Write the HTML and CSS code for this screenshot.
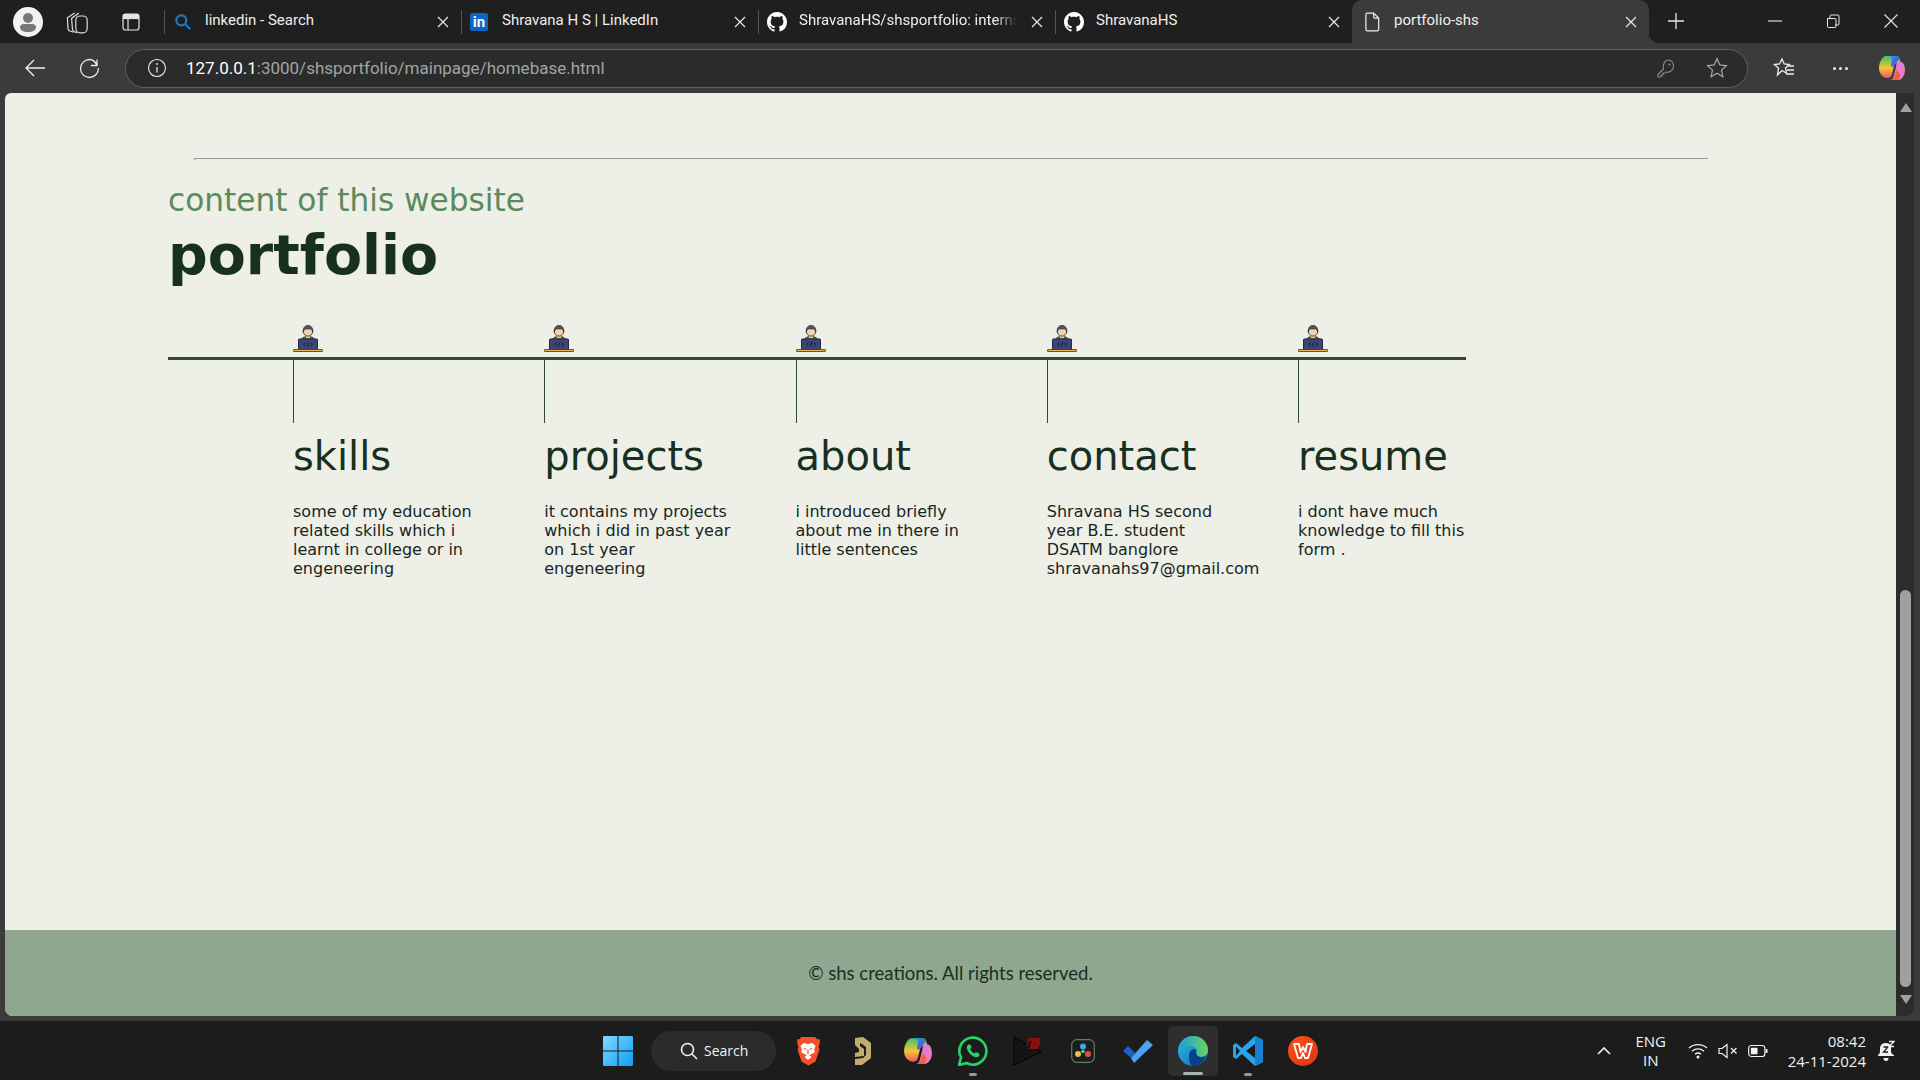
FILE: index.html
```html
<!DOCTYPE html>
<html lang="en">
<head>
    <meta charset="UTF-8">
    <title>portfolio-shs</title>
    <link rel="stylesheet" href="styles.css">
</head>
<body>

    <svg class="defs" width="0" height="0">
        <symbol id="github" viewBox="0 0 16 16">
            <path fill="#fff" d="M8 0C3.58 0 0 3.58 0 8c0 3.54 2.29 6.53 5.47 7.59.4.07.55-.17.55-.38 0-.19-.01-.82-.01-1.49-2.01.37-2.53-.49-2.69-.94-.09-.23-.48-.94-.82-1.13-.28-.15-.68-.52-.01-.53.63-.01 1.08.58 1.23.82.72 1.21 1.87.87 2.33.66.07-.52.28-.87.51-1.07-1.78-.2-3.64-.89-3.64-3.95 0-.87.31-1.59.82-2.15-.08-.2-.36-1.02.08-2.12 0 0 .67-.21 2.2.82.64-.18 1.32-.27 2-.27.68 0 1.36.09 2 .27 1.53-1.04 2.2-.82 2.2-.82.44 1.1.16 1.92.08 2.12.51.56.82 1.27.82 2.15 0 3.07-1.87 3.75-3.65 3.95.29.25.54.73.54 1.48 0 1.07-.01 1.93-.01 2.2 0 .21.15.46.55.38A8.013 8.013 0 0016 8c0-4.42-3.58-8-8-8z"/>
        </symbol>
        <symbol id="closex" viewBox="0 0 16 16">
            <path d="M3 3l10 10M13 3L3 13" stroke="#e8e8e8" stroke-width="1.2" fill="none"/>
        </symbol>
        <symbol id="coder" viewBox="0 0 30 27">
            <path d="M8 16c0-3 3-4.500 7-4.500s7 1.500 7 4.500z" fill="#6d6320" stroke="#2b2b1e" stroke-width=".8"/>
            <rect x="13" y="9" width="4" height="4" fill="#eec9a2"/>
            <circle cx="15" cy="6.500" r="4.600" fill="#f2d2ad" stroke="#2b2b2b" stroke-width=".8"/>
            <path d="M10.200 7.500C9.500 2.500 12.500.3 15 .3s5.500 2.200 4.800 7.200c-.5-2-1-3.500-2-3.500h-5.600c-1 0-1.500 1.500-2 3.500z" fill="#55565a" stroke="#2b2b2b" stroke-width=".6"/>
            <rect x="5.500" y="14" width="19" height="10.500" rx=".6" fill="#3b4676" stroke="#23284a" stroke-width="1"/>
            <path d="M12.500 17.500l-2 1.800 2 1.800M17.500 17.500l2 1.800-2 1.800M15.800 17l-1.600 4.600" fill="none" stroke="#171b36" stroke-width="1"/>
            <rect x=".5" y="24.500" width="29" height="2" rx=".5" fill="#f1b451" stroke="#3a3226" stroke-width=".8"/>
        </symbol>
    </svg>

    <div class="tabstrip">
        <div class="strip-left">
            <svg class="profile" viewBox="0 0 30 30"><circle cx="15" cy="15" r="15" fill="#f2f2f2"/><circle cx="15" cy="11" r="5" fill="#777"/><path d="M7 20c0-2 2-3 4-3h8c2 0 4 1 4 3 0 3-3 5-8 5s-8-2-8-5z" fill="#777"/></svg>
            <svg class="strip-icon strip-stack" viewBox="0 0 20 20"><g fill="none" stroke="#ddd" stroke-width="1"><path d="M7 18.500l-3-1C3 17 2.500 16.500 2.500 15.500L2 6.500 8 2.500"/><path d="M10 19l-2.500-1c-.8-.4-1.200-1-1.300-2L5.500 7l6-4.500"/><rect x="9" y="5" width="9.500" height="14" rx="3.500"/></g></svg>
            <svg class="strip-icon" viewBox="0 0 20 20"><g fill="none" stroke="#e4e4e4" stroke-width="1.200"><rect x="2" y="2" width="16" height="16" rx="2.500"/><path d="M2 6.500h16"/><path d="M7 6.500V18"/></g><rect x="2" y="2" width="16" height="4.500" fill="#e4e4e4"/></svg>
        </div>
        <div class="tab">
            <svg class="tab-icon" viewBox="0 0 18 18"><circle cx="7.500" cy="7.500" r="4.500" fill="none" stroke="#1a78c2" stroke-width="2"/><path d="M11 11l4.500 4.500" stroke="#1a78c2" stroke-width="2"/></svg>
            <span class="tab-title">linkedin - Search</span>
            <svg class="tab-close"><use href="#closex"/></svg>
        </div>
        <div class="tab">
            <span class="tab-icon li-badge">in</span>
            <span class="tab-title">Shravana H S | LinkedIn</span>
            <svg class="tab-close"><use href="#closex"/></svg>
        </div>
        <div class="tab">
            <svg class="tab-icon"><use href="#github"/></svg>
            <span class="tab-title tab-fade">ShravanaHS/shsportfolio: internship</span>
            <svg class="tab-close"><use href="#closex"/></svg>
        </div>
        <div class="tab">
            <svg class="tab-icon"><use href="#github"/></svg>
            <span class="tab-title">ShravanaHS</span>
            <svg class="tab-close"><use href="#closex"/></svg>
        </div>
        <div class="tab tab-active">
            <svg class="tab-icon" viewBox="0 0 18 18"><path d="M3.500 2.500C3.500 1.500 4 1 5 1h5.500l4.500 4.500V15.500c0 1-.5 1.500-1.500 1.500H5c-1 0-1.500-.5-1.500-1.500zM10.500 1v3.500c0 .7.400 1 1 1H15" fill="none" stroke="#eee" stroke-width="1.100"/></svg>
            <span class="tab-title">portfolio-shs</span>
            <svg class="tab-close"><use href="#closex"/></svg>
        </div>
        <svg class="new-tab" viewBox="0 0 18 18"><path d="M9 1v16M1 9h16" stroke="#e8e8e8" stroke-width="1.300"/></svg>
        <div class="win-controls">
            <svg viewBox="0 0 14 14"><path d="M0 7h14" stroke="#e8e8e8" stroke-width="1.100"/></svg>
            <svg viewBox="0 0 14 14"><path d="M1.500 4.500h7.500c.6 0 1 .4 1 1v7c0 .6-.4 1-1 1H2.500c-.6 0-1-.4-1-1z M4 4.500V2c0-.6.400-1 1-1h7c.6 0 1 .4 1 1v8c0 .6-.4 1-1 1h-3" fill="none" stroke="#e8e8e8" stroke-width="1"/></svg>
            <svg viewBox="0 0 14 14"><path d="M.5.5l13 13M13.500.5l-13 13" stroke="#e8e8e8" stroke-width="1.100"/></svg>
        </div>
    </div>

    <div class="toolbar">
        <svg class="tool tool-back" viewBox="0 0 22 22"><path d="M21 11H2M10 3l-8 8 8 8" fill="none" stroke="#eee" stroke-width="1.400"/></svg>
        <svg class="tool tool-reload" viewBox="0 0 22 22"><path d="M18 2.500v6h-6M18 8.500C16.500 5 14 2.500 10.500 2.500 6 2.500 1.500 6.500 1.500 11.500s4 9 9 9 9-4 9-9.500" fill="none" stroke="#eee" stroke-width="1.300"/></svg>
        <div class="addressbar">
            <svg class="addr-info" viewBox="0 0 20 20"><circle cx="10" cy="10" r="8.500" fill="none" stroke="#eee" stroke-width="1.100"/><path d="M10 9v5.500" stroke="#eee" stroke-width="1.200"/><circle cx="10" cy="6" r=".9" fill="#eee"/></svg>
            <div class="addr-url"><span class="addr-host">127.0.0.1</span>:3000/shsportfolio/mainpage/homebase.html</div>
            <svg class="addr-icon addr-key" viewBox="0 0 20 20"><path d="M7.500 11L2 16.500V19h3v-2h2v-2h2l1-1c3.500 1 7.500-1.500 7.500-6C17.500 4.500 15 2 12.500 2 9 2 6.500 6 7.500 11z" fill="none" stroke="#8c8c8c" stroke-width="1.100"/><circle cx="13.500" cy="6.500" r="1" fill="#8c8c8c"/></svg>
            <svg class="addr-icon addr-star" viewBox="0 0 22 22"><path d="M11 1.800l2.800 6.100 6.600.7-4.900 4.500 1.400 6.600-5.900-3.400-5.900 3.400 1.400-6.600L1.600 8.600l6.600-.7z" fill="none" stroke="#aaa" stroke-width="1.200"/></svg>
        </div>
        <svg class="tool tool-fav" viewBox="0 0 22 22"><path d="M9 2l2.200 5 5 .5-3.700 3.500 1 5.200L9 13.500 4.500 18l1-6.800L1.500 7.500l5-.5zM14 9h7M14 13h7M13 17h8" fill="none" stroke="#eee" stroke-width="1.300"/></svg>
        <div class="tool-dots"><span></span><span></span><span></span></div>
        <svg class="tool tool-copilot" viewBox="0 0 28 28"><defs><linearGradient id="cpa" x1="0" y1="0" x2="1" y2="1"><stop offset="0" stop-color="#1fb6ee"/><stop offset=".5" stop-color="#3a6fe0"/><stop offset="1" stop-color="#7b4fe0"/></linearGradient><linearGradient id="cpb" x1="0" y1="0" x2="0" y2="1"><stop offset="0" stop-color="#3cc06c"/><stop offset=".55" stop-color="#f4c531"/><stop offset="1" stop-color="#f0556a"/></linearGradient><linearGradient id="cpc" x1="0" y1="0" x2="1" y2="1"><stop offset="0" stop-color="#d779ee"/><stop offset="1" stop-color="#f37fb0"/></linearGradient></defs><path d="M8 2h10c2 0 3 1 3.500 2.500L24 12c-1-2-2.500-3-4.500-3-2 0-3 1-3.500 3l-2 8c-.6 2.500-2 4-4.500 4C5 24 1 20 1 14c0-5 3-12 7-12z" fill="url(#cpb)"/><path d="M8 2h11c1.500 0 2.500 1 2.500 2.500L16 12c-1 1.500-3 1-3-1l1-5c.3-2-1.500-4-6-4z" fill="url(#cpa)"/><path d="M20 8h3c2.500 0 4 4 4 8 0 5-3 10-7 10h-9c4 0 4-2 5-5l2-8c.4-2 .5-5 2-5z" fill="url(#cpc)"/><path d="M11 26c4 0 5-2 6-5l1.500-5c2 2 3.500 3.500 3.500 5.500 0 3-2 4.500-4 4.500z" fill="#f2603c"/></svg>
    </div>

    <div class="viewport-row">
        <div class="page">
            <main class="page-main">
                <hr class="rule">
                <h3 class="eyebrow">content of this website</h3>
                <h1 class="page-title">portfolio</h1>
                <div class="timeline">
                    <section class="stop">
                        <svg class="stop-icon"><use href="#coder"/></svg>
                        <div class="stop-tick"></div>
                        <h2>skills</h2>
                        <p>some of my education related skills which i learnt in college or in engeneering</p>
                    </section>
                    <section class="stop">
                        <svg class="stop-icon"><use href="#coder"/></svg>
                        <div class="stop-tick"></div>
                        <h2>projects</h2>
                        <p>it contains my projects which i did in past year on 1st year engeneering</p>
                    </section>
                    <section class="stop">
                        <svg class="stop-icon"><use href="#coder"/></svg>
                        <div class="stop-tick"></div>
                        <h2>about</h2>
                        <p>i introduced briefly about me in there in little sentences</p>
                    </section>
                    <section class="stop">
                        <svg class="stop-icon"><use href="#coder"/></svg>
                        <div class="stop-tick"></div>
                        <h2>contact</h2>
                        <p>Shravana HS second year B.E. student DSATM banglore shravanahs97@gmail.com</p>
                    </section>
                    <section class="stop">
                        <svg class="stop-icon"><use href="#coder"/></svg>
                        <div class="stop-tick"></div>
                        <h2>resume</h2>
                        <p>i dont have much knowledge to fill this form .</p>
                    </section>
                </div>
            </main>
            <footer class="page-footer">© shs creations. All rights reserved.</footer>
        </div>
        <div class="scrollbar">
            <div class="arrow-up"></div>
            <div class="thumb"></div>
            <div class="arrow-down"></div>
        </div>
    </div>

    <div class="taskbar">
        <div class="task-item">
            <svg class="task-icon" viewBox="0 0 29 29"><defs><linearGradient id="win" x1="0" y1="0" x2="1" y2="1"><stop offset="0" stop-color="#7fdcff"/><stop offset="1" stop-color="#0f9bf5"/></linearGradient></defs><path d="M0 1.500C0 .5.500 0 1.500 0H14v14H0zM15 0h12.500c1 0 1.500.5 1.500 1.500V14H15zM0 15h14v14H1.500C.5 29 0 28.500 0 27.500zM15 15h14v12.500c0 1-.5 1.500-1.500 1.500H15z" fill="url(#win)"/></svg>
        </div>
        <div class="task-search">
            <svg viewBox="0 0 18 18"><circle cx="7.500" cy="7.500" r="6" fill="none" stroke="#f2f2f2" stroke-width="1.600"/><path d="M12 12l5 5" stroke="#f2f2f2" stroke-width="1.600"/></svg>
            <span>Search</span>
        </div>
        <div class="task-item">
            <svg class="task-icon" viewBox="0 0 26 30"><path d="M6 1h14l2 2 3 .5-.5 5-1 3 1 2-4 12-7 4-7-4-4-12 1-2-1-3-.5-5 3-.5z" fill="#f5502a"/><path d="M13 8c-2 0-3-1-5-.5L5.500 10l1.500 4-1 2 3 2 3 1-2.500 2 3.500 3 3.500-3-2.500-2 3-1 3-2-1-2 1.500-4L18 7.500C16 7 15 8 13 8z" fill="#fff"/><path d="M9 12.500l2.500 1M17 12.500l-2.500 1M13 14v4" stroke="#f5502a" stroke-width="1.300"/></svg>
        </div>
        <div class="task-item">
            <svg class="task-icon task-gold" viewBox="0 0 20 30"><path d="M2 2l8-1 8 6v15l-9 7H2v-6l8-1 3-3v-8L9 8 7 7v3l4 3v7l-9 1v-4l4-1v-3L2 9z" fill="#c4ac6e"/></svg>
        </div>
        <div class="task-item">
            <svg class="task-icon" viewBox="0 0 28 28"><path d="M8 2h10c2 0 3 1 3.500 2.500L24 12c-1-2-2.500-3-4.500-3-2 0-3 1-3.500 3l-2 8c-.6 2.500-2 4-4.500 4C5 24 1 20 1 14c0-5 3-12 7-12z" fill="url(#cpb)"/><path d="M8 2h11c1.500 0 2.500 1 2.500 2.500L16 12c-1 1.500-3 1-3-1l1-5c.3-2-1.500-4-6-4z" fill="url(#cpa)"/><path d="M20 8h3c2.500 0 4 4 4 8 0 5-3 10-7 10h-9c4 0 4-2 5-5l2-8c.4-2 .5-5 2-5z" fill="url(#cpc)"/><path d="M11 26c4 0 5-2 6-5l1.500-5c2 2 3.500 3.500 3.500 5.500 0 3-2 4.500-4 4.500z" fill="#f2603c"/></svg>
        </div>
        <div class="task-item task-open">
            <svg class="task-icon" viewBox="0 0 30 30"><path d="M1 29l2-7.500A13.500 13.500 0 1 1 8.500 27z" fill="none" stroke="#25d366" stroke-width="2.600" stroke-linejoin="round"/><path d="M10.500 8.500c-1.500 1-2 2.500-1.500 4.500 1 3.500 4.500 7 8 8 2 .5 3.500 0 4.500-1.500l-.5-2-3-1.500-1.500 1.500c-2-.8-3.500-2.500-4.500-4.500l1.500-1.500-1-3z" fill="#25d366"/></svg>
        </div>
        <div class="task-item">
            <svg class="task-icon" viewBox="0 0 30 30"><path d="M1 1l27 15L1 29z" fill="#141414" stroke="#000" stroke-width="1"/><path d="M13 10l3-8h12l-2 3h-3l-3 8h-4l3-8h-3l-1 5z" fill="#8c0f0f"/><path d="M20 13l3-8h5l-3 8z" fill="#8c0f0f"/></svg>
        </div>
        <div class="task-item">
            <svg class="task-icon task-davinci" viewBox="0 0 24 24"><rect x=".7" y=".7" width="22.600" height="22.600" rx="5" fill="#1a1d22" stroke="#6a7a5a" stroke-width="1.200"/><circle cx="12" cy="7.500" r="3" fill="#43a5e8"/><circle cx="7" cy="15" r="3" fill="#e9c23c"/><circle cx="17" cy="15" r="3" fill="#e8484d"/><circle cx="12" cy="12.500" r="1.800" fill="#6fc36a"/></svg>
        </div>
        <div class="task-item">
            <svg class="task-icon" viewBox="0 0 30 24"><path d="M0 12l5-5 7 7-4 5z" fill="#1c5fc9"/><path d="M8 19L24 1l6 5-19 18z" fill="#4da2f2"/></svg>
        </div>
        <div class="task-item task-current">
            <svg class="task-icon" viewBox="0 0 30 30"><defs><linearGradient id="edge" x1="0" y1="0" x2="1" y2="1"><stop offset="0" stop-color="#2ec1e0"/><stop offset="1" stop-color="#0b62b8"/></linearGradient><linearGradient id="edge2" x1="0" y1="0" x2="1" y2="0"><stop offset="0" stop-color="#1c9fd8"/><stop offset="1" stop-color="#6ad85a"/></linearGradient></defs><circle cx="15" cy="15" r="15" fill="url(#edge)"/><path d="M2 13C4 5 10 0 15 0c8 0 15 6 15 14 0 4-3 7-7 7-3 0-5-1-5-3 0-1 1-1 1-3 0-3-3-5-6-5-5 0-9 1-11 3z" fill="url(#edge2)"/><path d="M11 20c0-4 2-7 6-7 1 1 1 2 1 3 0 3 2 5 6 5 1 0 3-.5 4-1.500C26 26 21 30 15 30c-3 0-4-5-4-10z" fill="#0b3f8c"/></svg>
        </div>
        <div class="task-item task-open">
            <svg class="task-icon" viewBox="0 0 30 30"><path d="M22 0l8 4v22l-8 4-13-12-6 5-3-2v-12l3-2 6 5z" fill="#2aa5ec"/><path d="M22 0l8 4v22l-8 4z" fill="#1583cf"/><path d="M22 8l-9 7 9 7zM3 10.500v9l4-4.500z" fill="#1c1c1c"/></svg>
        </div>
        <div class="task-item">
            <svg class="task-icon" viewBox="0 0 30 30"><defs><linearGradient id="wps" x1="0" y1="0" x2="1" y2="1"><stop offset="0" stop-color="#f7521c"/><stop offset="1" stop-color="#e43210"/></linearGradient></defs><circle cx="15" cy="15" r="15" fill="url(#wps)"/><path d="M6 8h5l1.500 8L15 11l2.500 5L19 8h5l-4 14h-3l-2-5-2 5h-3z" fill="none" stroke="#fff" stroke-width="1.800" stroke-linejoin="round"/></svg>
        </div>

        <div class="tray">
            <svg class="tray-chevron" viewBox="0 0 14 8"><path d="M1 7l6-6 6 6" fill="none" stroke="#f2f2f2" stroke-width="1.600"/></svg>
            <div class="tray-lang"><span>ENG</span><span>IN</span></div>
            <div class="tray-status">
                <svg viewBox="0 0 20 16"><g fill="none" stroke="#f2f2f2" stroke-width="1.300"><path d="M1 5c5-4.500 13-4.500 18 0"/><path d="M4 8.200c3.500-3 8.500-3 12 0"/><path d="M7 11.200c2-1.600 4-1.600 6 0"/></g><circle cx="10" cy="14" r="1.500" fill="#f2f2f2"/></svg>
                <svg viewBox="0 0 20 16"><path d="M1 5.500h3L9 1.500v13L4 10.500H1zM13 5l5.500 5.500M18.500 5L13 10.500" fill="none" stroke="#f2f2f2" stroke-width="1.200"/></svg>
                <svg viewBox="0 0 21 14"><rect x=".7" y="1.200" width="17" height="11.600" rx="3" fill="none" stroke="#f2f2f2" stroke-width="1.200"/><rect x="3" y="3.500" width="7" height="7" rx="1" fill="#f2f2f2"/><rect x="18.500" y="5" width="2" height="4" fill="#f2f2f2"/></svg>
            </div>
            <div class="tray-clock"><span>08:42</span><span>24-11-2024</span></div>
            <div class="tray-bell">
                <svg viewBox="0 0 18 21"><path d="M1 15c2-1 2-3 2-6 0-4 2-6 6-6 3 0 4 1 5 3v3c0 3 0 5 3 6v1H1zM6.500 18h5c0 2-1 3-2.500 3s-2.500-1-2.500-3z" fill="#f2f2f2"/><path d="M6.500 7h4.500l-4.500 5h4.500" fill="none" stroke="#1c1c1c" stroke-width="1.300"/><path d="M12 1.500h5l-5 5h5" fill="none" stroke="#f2f2f2" stroke-width="1.300"/></svg>
            </div>
        </div>
    </div>

</body>
</html>
```

FILE: styles.css
```css
* {
    box-sizing: border-box;
}

html, body {
    margin: 0;
    height: 1080px;
    overflow: hidden;
}

body {
    display: flex;
    flex-direction: column;
    background-color: #3b3b3b;
    font-family: Roboto, "Open Sans", sans-serif;
}

.defs {
    display: block;
    height: 0;
}

/* tab strip */
.tabstrip {
    display: flex;
    align-items: stretch;
    height: 43px;
    background-color: #1f1f1f;
    color: #eee;
    font-size: 15px;
}

.strip-left {
    width: 164px;
    display: flex;
    align-items: center;
    padding-left: 13px;
}

.profile {
    width: 30px;
    height: 30px;
}

.strip-icon {
    width: 20px;
    height: 20px;
    margin-left: 32px;
}

.strip-stack {
    width: 24px;
    height: 24px;
    margin-left: 22px;
}

.tab {
    position: relative;
    width: 297px;
    display: flex;
    align-items: center;
    padding: 0 10px 0 9px;
}

.tab::before {
    content: "";
    position: absolute;
    left: 0;
    top: 10px;
    bottom: 9px;
    width: 1px;
    background-color: #555;
}

.tab-icon {
    width: 20px;
    height: 20px;
    flex: none;
    margin-right: 12px;
}

.li-badge {
    width: 18px;
    height: 18px;
    margin-right: 14px;
    background-color: #0a66c2;
    color: #fff;
    border-radius: 2px;
    font-weight: 700;
    font-size: 15px;
    line-height: 19px;
    text-align: center;
}

.tab-title {
    flex: 1;
    white-space: nowrap;
    overflow: hidden;
    margin-bottom: 3px;
}

.tab-fade {
    margin-right: 12px;
    -webkit-mask-image: linear-gradient(to right, #000 90%, transparent);
    mask-image: linear-gradient(to right, #000 90%, transparent);
}

.tab-close {
    width: 16px;
    height: 16px;
    flex: none;
}

.tab-active {
    background-color: #3b3b3b;
    border-radius: 10px 10px 0 0;
    padding-left: 10px;
}

.tab-active::before {
    display: none;
}

.tab-active::after {
    content: "";
    position: absolute;
    right: -10px;
    bottom: 0;
    width: 10px;
    height: 10px;
    background: radial-gradient(circle at 100% 0, transparent 10px, #3b3b3b 10.5px);
}

.new-tab {
    width: 18px;
    height: 18px;
    margin: 12px 0 0 18px;
}

.win-controls {
    margin-left: auto;
    display: flex;
    gap: 44px;
    padding: 14px 22px 0 0;
}

.win-controls svg {
    width: 14px;
    height: 14px;
}

/* toolbar */
.toolbar {
    display: flex;
    align-items: center;
    height: 50px;
    background-color: #3b3b3b;
}

.tool {
    flex: none;
}

.tool-back {
    width: 22px;
    height: 22px;
    margin-left: 24px;
}

.tool-reload {
    width: 22px;
    height: 22px;
    margin-left: 33px;
}

.addressbar {
    flex: none;
    width: 1623px;
    height: 39px;
    margin-left: 24px;
    display: flex;
    align-items: center;
    background-color: #2b2b2b;
    border: 1px solid #606060;
    border-radius: 20px;
    padding-left: 21px;
}

.addr-info {
    width: 20px;
    height: 20px;
}

.addr-url {
    margin-left: 19px;
    font-size: 17px;
    color: #a3a3a3;
}

.addr-host {
    color: #fff;
}

.addr-icon {
    width: 20px;
    height: 20px;
}

.addr-key {
    margin-left: auto;
}

.addr-star {
    width: 22px;
    height: 22px;
    margin: 0 19px 0 30px;
}

.tool-fav {
    width: 22px;
    height: 22px;
    margin-left: 25px;
}

.tool-dots {
    display: flex;
    gap: 3px;
    margin-left: 38px;
}

.tool-dots span {
    width: 3px;
    height: 3px;
    border-radius: 50%;
    background-color: #eee;
}

.tool-copilot {
    width: 28px;
    height: 28px;
    margin-left: 30px;
}

/* page area */
.viewport-row {
    display: flex;
    height: 923px;
    padding-left: 5px;
}

.page {
    width: 1891px;
    display: flex;
    flex-direction: column;
    background-color: #eeefe6;
    border-radius: 6px 0 0 8px;
    overflow: hidden;
}

.page-main {
    flex: 1;
    padding: 65px 0 0 163px;
}

.rule {
    width: 1514px;
    margin: 0 0 0 26px;
    border: 0;
    border-top: 1px solid #999;
    border-left: 1px solid #999;
    height: 2px;
}

.eyebrow {
    margin: 22px 0 0;
    font-family: "DejaVu Sans", Verdana, sans-serif;
    font-weight: 400;
    font-size: 31.2px;
    line-height: 36px;
    color: #5b8a5c;
}

.page-title {
    margin: 5px 0 0;
    font-family: "DejaVu Sans", Verdana, sans-serif;
    font-weight: 700;
    font-size: 55.5px;
    line-height: 64px;
    color: #17301f;
}

.timeline {
    display: flex;
    width: 1298px;
    margin-top: 38px;
    padding-left: 125px;
    background: linear-gradient(#2f4a2c, #2f4a2c) no-repeat 0 32px / 100% 3px;
}

.stop {
    flex: 0 0 251.25px;
    color: #17301f;
}

.stop-icon {
    display: block;
    width: 30px;
    height: 27px;
    margin-bottom: 8px;
}

.stop-tick {
    width: 1px;
    height: 63px;
    background-color: #2f4a2c;
}

.stop h2 {
    margin: 9px 0 0;
    font-family: "DejaVu Sans", Verdana, sans-serif;
    font-weight: 400;
    font-size: 40px;
    line-height: 48px;
}

.stop p {
    width: 190px;
    margin: 22px 0 0;
    font-family: "DejaVu Sans", Verdana, sans-serif;
    font-size: 16px;
    line-height: 19px;
    color: #17261f;
}

.page-footer {
    height: 86px;
    background-color: #90a78f;
    color: #17301f;
    font-family: Lato, sans-serif;
    font-size: 18.5px;
    text-align: center;
    line-height: 86px;
}

/* scrollbar */
.scrollbar {
    width: 18px;
    height: 923px;
    background-color: #2c2c2c;
    border-radius: 0 0 8px 0;
    padding: 10px 4px 0;
}

.arrow-up,
.arrow-down {
    width: 0;
    height: 0;
    border-left: 6px solid transparent;
    border-right: 6px solid transparent;
}

.arrow-up {
    border-bottom: 9px solid #a0a0a0;
}

.arrow-down {
    margin-top: 8px;
    border-top: 9px solid #a0a0a0;
}

.thumb {
    width: 11px;
    height: 397px;
    margin-top: 478px;
    background-color: #a0a0a0;
    border-radius: 6px;
}

/* taskbar */
.taskbar {
    margin-top: 5px;
    height: 59px;
    display: flex;
    align-items: center;
    padding-left: 590px;
    background-color: #1c1c1c;
    color: #f2f2f2;
}

.task-item {
    position: relative;
    width: 55px;
    height: 50px;
    display: flex;
    align-items: center;
    justify-content: center;
}

.task-icon {
    width: 30px;
    height: 30px;
}

.task-gold {
    width: 20px;
}

.task-davinci {
    width: 24px;
    height: 24px;
}

.task-open::after {
    content: "";
    position: absolute;
    bottom: 0;
    left: 24px;
    width: 8px;
    height: 3px;
    border-radius: 2px;
    background-color: #999;
}

.task-current::before {
    content: "";
    position: absolute;
    left: 3px;
    right: 2px;
    top: 0;
    bottom: 0;
    border-radius: 5px;
    background-color: #2e2e2e;
}

.task-current .task-icon {
    position: relative;
}

.task-current::after {
    content: "";
    position: absolute;
    bottom: 1px;
    left: 18px;
    width: 20px;
    height: 3px;
    border-radius: 2px;
    background-color: #a9b4b4;
}

.task-search {
    width: 125px;
    height: 40px;
    margin: 0 4px 0 6px;
    display: flex;
    align-items: center;
    padding-left: 29px;
    background-color: #2b2b2b;
    border-radius: 20px;
    font-family: "Open Sans", sans-serif;
    font-size: 14px;
}

.task-search svg {
    width: 18px;
    height: 18px;
    margin-right: 6px;
}

.tray {
    margin-left: auto;
    display: flex;
    align-items: center;
    padding-right: 25px;
    font-family: "Open Sans", sans-serif;
    font-size: 15px;
}

.tray-chevron {
    width: 14px;
    height: 8px;
}

.tray-lang {
    display: flex;
    flex-direction: column;
    align-items: center;
    line-height: 19px;
    margin-left: 22px;
    width: 36px;
}

.tray-status {
    display: flex;
    align-items: center;
    gap: 10px;
    margin-left: 19px;
}

.tray-status svg {
    width: 20px;
    height: 16px;
}

.tray-clock {
    display: flex;
    flex-direction: column;
    align-items: flex-end;
    line-height: 20px;
    margin-left: 20px;
}

.tray-bell {
    margin-left: 11px;
    display: flex;
}

.tray-bell svg {
    width: 18px;
    height: 21px;
}
```
